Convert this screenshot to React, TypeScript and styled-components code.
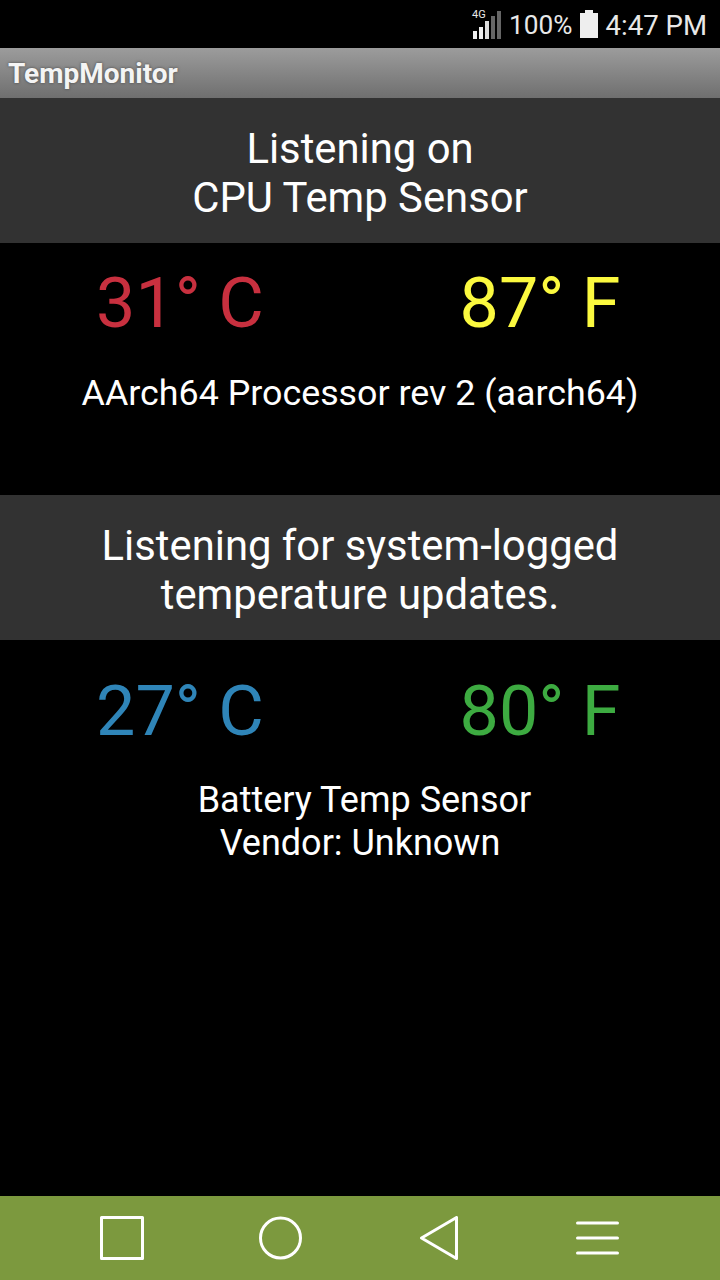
import styled, { createGlobalStyle } from "styled-components";

const GlobalStyle = createGlobalStyle`
  html, body {
    margin: 0;
    padding: 0;
    background: #000;
  }
  * {
    box-sizing: border-box;
  }
`;

const Screen = styled.div`
  width: 720px;
  height: 1280px;
  display: flex;
  flex-direction: column;
  background: #000;
  font-family: Roboto, "Liberation Sans", sans-serif;
  color: #fff;
  overflow: hidden;
`;

const StatusBar = styled.div`
  height: 48px;
  display: flex;
  align-items: center;
  justify-content: flex-end;
  padding-right: 13px;
  padding-top: 2px;
  color: #e8e8e8;
`;

const SignalSvg = styled.svg`
  margin-top: -2px;
`;

const BatteryPct = styled.span`
  margin-left: 6px;
  font-size: 26.2px;
`;

const Clock = styled.span`
  margin-left: 7px;
  font-size: 27.6px;
`;

const BatteryIcon = styled.svg`
  margin-left: 8px;
  margin-top: -2px;
`;

const TitleBar = styled.div`
  height: 50px;
  padding-left: 8px;
  display: flex;
  align-items: center;
  background: linear-gradient(#9c9c9c, #6f6f6f);
  font-size: 28px;
  font-weight: 700;
  color: #f4f4f4;
  text-shadow: 0 0 3px #444;
`;

const Content = styled.div`
  flex: 1;
  display: flex;
  flex-direction: column;
`;

const Section = styled.div<{ $height: number }>`
  height: ${p => p.$height}px;
`;

const Header = styled.div`
  height: 145px;
  padding-top: 4px;
  background: #323232;
  display: flex;
  flex-direction: column;
  align-items: center;
  justify-content: center;
  font-size: 41.8px;
  line-height: 49px;
  text-align: center;
`;

const Temps = styled.div<{ $top: number }>`
  display: grid;
  grid-template-columns: 1fr 1fr;
  padding-top: ${p => p.$top}px;
  text-align: center;
`;

const Temp = styled.div<{ $color: string }>`
  font-size: 70px;
  line-height: 82px;
  color: ${p => p.$color};
`;

const Caption = styled.div<{ $top: number; $size: number }>`
  margin-top: ${p => p.$top}px;
  font-size: ${p => p.$size}px;
  line-height: 43px;
  text-align: center;
`;

// the first line of the battery caption sits a little right of centre
const OffsetLine = styled.div`
  padding-left: 9px;
`;

const NavBar = styled.div`
  height: 84px;
  padding: 0 43px;
  background: #7c993e;
  display: grid;
  grid-template-columns: repeat(4, 1fr);
  justify-items: center;
  align-items: center;
`;

function SignalIcon() {
  return (
    <SignalSvg width="32" height="30" viewBox="0 0 32 30">
      <text x="1" y="9" fontSize="11" fill="#e8e8e8" fontFamily="Roboto, sans-serif">
        4G
      </text>
      <rect x="2" y="22" width="4" height="8" fill="#eee" />
      <rect x="8" y="18" width="4" height="12" fill="#eee" />
      <rect x="14" y="12" width="4" height="18" fill="#ddd" />
      <rect x="20" y="7" width="4" height="23" fill="#666" />
      <rect x="26" y="2" width="4" height="28" fill="#666" />
    </SignalSvg>
  );
}

function NavIcon({ children }: { children: React.ReactNode }) {
  return (
    <svg width="44" height="44" viewBox="0 0 44 44" fill="none" stroke="#fff" strokeWidth="3" strokeLinejoin="round" strokeLinecap="round">
      {children}
    </svg>
  );
}

export default function App() {
  return (
    <>
      <GlobalStyle />
      <Screen>
        <StatusBar>
          <SignalIcon />
          <BatteryPct>100%</BatteryPct>
          <BatteryIcon width="18" height="28" viewBox="0 0 18 28">
            <path d="M5 0h8v3h5v25H0V3h5z" fill="#eee" />
          </BatteryIcon>
          <Clock>4:47 PM</Clock>
        </StatusBar>
        <TitleBar>TempMonitor</TitleBar>
        <Content>
          <Section $height={397}>
            <Header>
              <div>Listening on</div>
              <div>CPU Temp Sensor</div>
            </Header>
            <Temps $top={19}>
              <Temp $color="#c8303f">31° C</Temp>
              <Temp $color="#fbf93f">87° F</Temp>
            </Temps>
            <Caption $top={28} $size={35.8}>AArch64 Processor rev 2 (aarch64)</Caption>
          </Section>
          <Section $height={554}>
            <Header>
              <div>Listening for system-logged</div>
              <div>temperature updates.</div>
            </Header>
            <Temps $top={30}>
              <Temp $color="#2f85b8">27° C</Temp>
              <Temp $color="#3dab41">80° F</Temp>
            </Temps>
            <Caption $top={27} $size={36}>
              <OffsetLine>Battery Temp Sensor</OffsetLine>
              <div>Vendor: Unknown</div>
            </Caption>
          </Section>
        </Content>
        <NavBar>
          <NavIcon>
            <rect x="1.5" y="1.5" width="41" height="41" />
          </NavIcon>
          <NavIcon>
            <circle cx="21.5" cy="22" r="20" />
          </NavIcon>
          <NavIcon>
            <path d="M4.5 22 L39.5 1.5 V42.5 Z" />
          </NavIcon>
          <NavIcon>
            <path d="M1.5 7h40M1.5 22h40M1.5 37h40" />
          </NavIcon>
        </NavBar>
      </Screen>
    </>
  );
}
